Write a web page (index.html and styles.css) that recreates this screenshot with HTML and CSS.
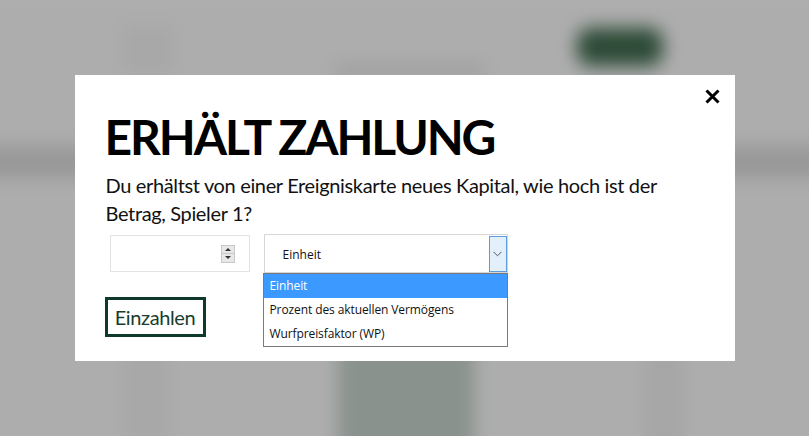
FILE: index.html
```html
<!DOCTYPE html>
<html lang="de">
<head>
<meta charset="utf-8">
<title>Erhält Zahlung</title>
<link rel="stylesheet" href="styles.css">
</head>
<body>
<div class="page">
  <div class="topbar">
    <div class="ghost-logo"></div>
    <div class="ghost-nav"></div>
    <div class="ghost-btn"></div>
  </div>
  <div class="band"></div>
  <div class="content">
    <div class="col col-a"></div>
    <div class="col col-b"></div>
    <div class="col col-c"></div>
  </div>
</div>

<div class="overlay">
  <div class="modal">
    <button class="close" aria-label="Schließen">
      <svg width="15" height="15" viewBox="0 0 15 15"><path d="M1.5 1.5 L13.5 13.5 M13.5 1.5 L1.5 13.5" stroke="#000" stroke-width="3" stroke-linecap="butt" fill="none"/></svg>
    </button>
    <h1 class="title">ERHÄLT ZAHLUNG</h1>
    <p class="question">Du erhältst von einer Ereigniskarte neues Kapital, wie hoch ist der Betrag, Spieler 1?</p>
    <div class="fields">
      <div class="number">
        <span class="spin">
          <span class="spin-up"></span>
          <span class="spin-down"></span>
        </span>
      </div>
      <div class="select">
        <span class="select-value">Einheit</span>
        <span class="select-btn">
          <svg width="9" height="6" viewBox="0 0 9 6"><path d="M0.5 0.8 L4.5 4.8 L8.5 0.8" stroke="#555" stroke-width="1" fill="none"/></svg>
        </span>
        <ul class="options">
          <li class="option selected">Einheit</li>
          <li class="option">Prozent des aktuellen Vermögens</li>
          <li class="option">Wurfpreisfaktor (WP)</li>
        </ul>
      </div>
    </div>
    <button class="pay">Einzahlen</button>
  </div>
</div>
</body>
</html>
```

FILE: styles.css
```css
* { box-sizing: border-box; }
html, body { margin: 0; padding: 0; }
body {
  width: 809px;
  height: 436px;
  overflow: hidden;
  background: #adadad;
  font-family: Lato, "Open Sans", sans-serif;
}

/* blurred page behind the dialog (extends past the edges so the blur does not fade) */
.page {
  filter: blur(9px);
  height: 476px;
  margin: -20px -30px 0;
  padding-top: 20px;
  background: #adadad;
  display: flex;
  flex-direction: column;
}
.topbar {
  height: 146px;
  display: flex;
  align-items: flex-start;
  padding-left: 152px;
}
.ghost-logo {
  width: 52px;
  height: 50px;
  margin-top: 24px;
  background: #a8a8a8;
}
.ghost-nav {
  width: 150px;
  height: 20px;
  margin-top: 62px;
  margin-left: 160px;
  background: #a2a2a2;
}
.ghost-btn {
  width: 86px;
  height: 38px;
  margin-top: 28px;
  margin-left: 93px;
  border-radius: 14px;
  background: #2d4b37;
}
.band {
  height: 32px;
  background: #989898;
}
.content {
  flex: 1;
  display: flex;
  padding-left: 152px;
}
.col { height: 100%; }
.col-a { width: 48px; background: #a8a8a8; }
.col-b { width: 136px; margin-left: 168px; background: #89928d; }
.col-c { width: 40px; margin-left: 170px; background: #a6a6a6; }

/* overlay + dialog */
.overlay {
  position: fixed;
  inset: 0;
  display: flex;
  align-items: center;
  justify-content: center;
}
.modal {
  position: relative;
  width: 660px;
  height: 286px;
  margin-top: -1px;
  background: #fff;
  padding: 33px 30px 24px 30px;
}
.close {
  position: absolute;
  top: 14px;
  right: 15px;
  width: 15px;
  height: 15px;
  padding: 0;
  border: 0;
  background: none;
  display: block;
}
.close svg { display: block; }
.title {
  margin: 0;
  font-family: Lato, sans-serif;
  font-weight: 700;
  font-size: 48px;
  line-height: 1.2;
  color: #000;
  letter-spacing: -2.1px;
  white-space: nowrap;
}
.question {
  margin: 6px 0 0 1px;
  font-family: Lato, sans-serif;
  font-size: 20px;
  line-height: 28px;
  color: #111;
  letter-spacing: -0.35px;
}
.fields {
  display: flex;
  align-items: flex-start;
  margin-top: 7px;
  padding-left: 5px;
  gap: 14px;
}
.number {
  width: 140px;
  height: 37px;
  margin-top: 1px;
  border: 1px solid #e3e3e3;
  display: flex;
  justify-content: flex-end;
  align-items: center;
  padding-right: 14px;
}
.spin {
  width: 14px;
  height: 18px;
  display: flex;
  flex-direction: column;
  border: 1px solid #c8c8c8;
  background: #e8e8e8;
}
.spin-up, .spin-down {
  flex: 1;
  display: flex;
  align-items: center;
  justify-content: center;
}
.spin-up { border-bottom: 1px solid #c8c8c8; }
.spin-up::before {
  content: "";
  border-left: 3px solid transparent;
  border-right: 3px solid transparent;
  border-bottom: 3px solid #333;
}
.spin-down::before {
  content: "";
  border-left: 3px solid transparent;
  border-right: 3px solid transparent;
  border-top: 3px solid #333;
}
.select {
  position: relative;
  width: 244px;
  height: 39px;
  border: 1px solid #d6d6d6;
  display: flex;
  align-items: center;
  padding-left: 18px;
  font-family: "Open Sans", "Noto Sans", sans-serif;
  font-size: 12px;
  color: #111;
}
.select-value { flex: 1; margin-top: 2px; }
.select-btn {
  align-self: stretch;
  width: 18px;
  margin: 1px 0 0;
  border: 1px solid #5a9ee0;
  background: #e3effb;
  display: flex;
  align-items: center;
  justify-content: center;
}
.select-btn svg { display: block; }
.options {
  position: absolute;
  left: -2px;
  top: 38px;
  width: 245px;
  margin: 0;
  padding: 0;
  list-style: none;
  background: #fff;
  border: 1px solid #7a7a7a;
}
.option {
  height: 24px;
  line-height: 24px;
  padding-left: 6px;
  font-family: "Open Sans", "Noto Sans", sans-serif;
  font-size: 12px;
  color: #111;
  letter-spacing: -0.1px;
}
.option.selected {
  background: #3c99ff;
  color: #fff;
}
.pay {
  display: block;
  margin-top: 24px;
  width: 101px;
  height: 40px;
  padding: 0;
  border: 3px solid #0e3a2a;
  background: #fff;
  font-family: Lato, sans-serif;
  font-size: 20px;
  letter-spacing: -0.4px;
  color: #163d2d;
}
```
